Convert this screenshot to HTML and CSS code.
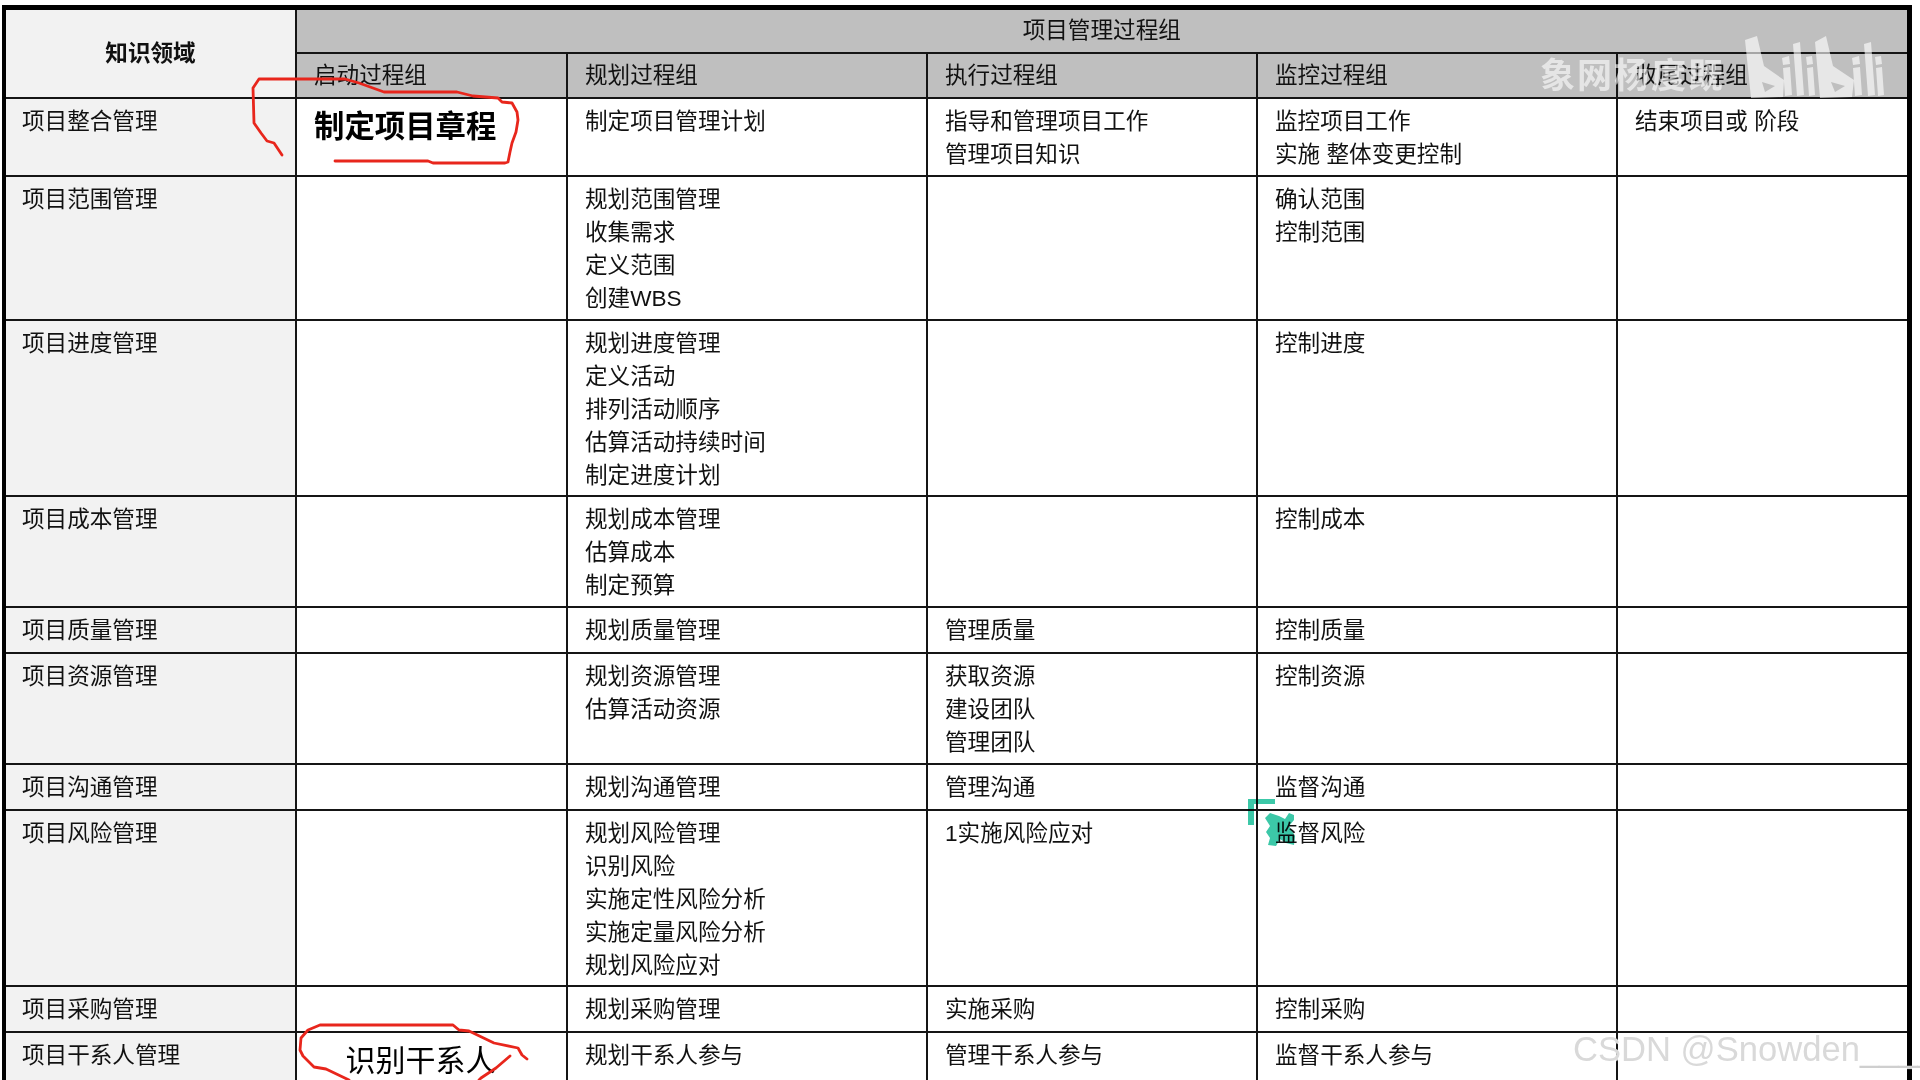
FILE: index.html
```html
<!DOCTYPE html>
<html lang="zh-CN">
<head>
<meta charset="utf-8">
<title>项目管理过程组</title>
<link rel="stylesheet" href="styles.css">
</head>
<body>
<main class="page">
<table class="grid">
<colgroup><col class="c0"><col class="c1"><col class="c2"><col class="c3"><col class="c4"><col class="c5"></colgroup>
<thead>
<tr class="h-top"><th rowspan="2" class="area-head">知识领域</th><th colspan="5" class="group">项目管理过程组</th></tr>
<tr class="h-sub"><th class="group sub">启动过程组</th><th class="group sub">规划过程组</th><th class="group sub">执行过程组</th><th class="group sub">监控过程组</th><th class="group sub">收尾过程组</th></tr>
</thead>
<tbody>
<tr class="r1"><th class="area">项目整合管理</th><td class="big bold">制定项目章程</td><td>制定项目管理计划</td><td>指导和管理项目工作<br>管理项目知识</td><td>监控项目工作<br>实施 整体变更控制</td><td>结束项目或 阶段</td></tr>
<tr class="r2"><th class="area">项目范围管理</th><td></td><td>规划范围管理<br>收集需求<br>定义范围<br>创建WBS</td><td></td><td>确认范围<br>控制范围</td><td></td></tr>
<tr class="r3"><th class="area">项目进度管理</th><td></td><td>规划进度管理<br>定义活动<br>排列活动顺序<br>估算活动持续时间<br>制定进度计划</td><td></td><td>控制进度</td><td></td></tr>
<tr class="r4"><th class="area">项目成本管理</th><td></td><td>规划成本管理<br>估算成本<br>制定预算</td><td></td><td>控制成本</td><td></td></tr>
<tr class="r5"><th class="area">项目质量管理</th><td></td><td>规划质量管理</td><td>管理质量</td><td>控制质量</td><td></td></tr>
<tr class="r4"><th class="area">项目资源管理</th><td></td><td>规划资源管理<br>估算活动资源</td><td>获取资源<br>建设团队<br>管理团队</td><td>控制资源</td><td></td></tr>
<tr class="r5"><th class="area">项目沟通管理</th><td></td><td>规划沟通管理</td><td>管理沟通</td><td>监督沟通</td><td></td></tr>
<tr class="r3"><th class="area">项目风险管理</th><td></td><td>规划风险管理<br>识别风险<br>实施定性风险分析<br>实施定量风险分析<br>规划风险应对</td><td>1实施风险应对</td><td>监督风险</td><td></td></tr>
<tr class="r5"><th class="area">项目采购管理</th><td></td><td>规划采购管理</td><td>实施采购</td><td>控制采购</td><td></td></tr>
<tr class="r6"><th class="area">项目干系人管理</th><td class="big center">识别干系人</td><td>规划干系人参与</td><td>管理干系人参与</td><td>监督干系人参与</td><td></td></tr>
</tbody>
</table>
<svg class="marks" viewBox="0 0 1920 1080" aria-hidden="true">
<g class="ink">
<path d="M282 155L274 143L267 141L261 133L254 123L253 88L259 79L326 79L345 79L359 83L384 92L457 92L473 96L498 98L502 102L512 103L517 112L518 120L516 132L512 143L510 152L508 162L505 163L433 163L428 161L335 161"/>
<path d="M349 1080L326 1069L314 1067L303 1056L300 1050L301 1038L308 1030L320 1025L453 1025L459 1030L469 1031L494 1043L518 1048L522 1055L527 1059"/>
<path d="M510 1056L496 1068L481 1078L479 1080"/>
</g>
<g class="teal">
<path d="M1248 799H1275V804H1254V825H1248Z"/>
<path d="M1265 818L1270 813L1279 816L1285 819L1289 813L1294 815L1294 820L1289 826L1295 836L1294 845L1286 843L1280 839L1276 846L1268 845L1270 838L1266 832L1270 826Z"/>
</g>
<g class="logo">
<path d="M1745 40L1757 36L1764 66L1784 80L1783 97L1751 98ZM1762 82L1765 92L1775 86Z" fill-rule="evenodd"/>
<path d="M1782 58L1789 56L1790 64L1783 65ZM1783 68L1790 67L1792 95L1785 96ZM1793 44L1800 42L1804 95L1797 96ZM1806 57L1812 56L1813 64L1807 65ZM1807 68L1813 67L1815 95L1809 96Z"/>
<path d="M1815 42L1826 36L1833 66L1854 80L1852 97L1820 98ZM1831 82L1835 92L1845 86Z" fill-rule="evenodd"/>
<path d="M1852 58L1859 56L1860 64L1853 65ZM1853 68L1860 67L1862 95L1855 96ZM1864 44L1871 42L1875 95L1868 96ZM1875 57L1881 56L1882 64L1876 65ZM1876 68L1882 67L1884 95L1878 96Z"/>
</g>
</svg>
<div class="wm-cn">象网杨度既</div>
<div class="wm-csdn">CSDN @Snowden<span class="wm-rule">____</span></div>
</main>
</body>
</html>
```
FILE: styles.css
```css
html, body { margin: 0; padding: 0; background: #fff; }
body { width: 1920px; height: 1080px; overflow: hidden; }
.page { position: relative; width: 1920px; height: 1080px; overflow: hidden; padding: 5px 0 0 2px; box-sizing: border-box; filter: blur(0.4px); }
.grid {
  border-collapse: collapse; table-layout: fixed; width: 1907px;
  font-family: "Liberation Sans", "Noto Sans CJK SC", sans-serif;
  font-size: 22.6px; line-height: 33px; color: #111; border: 4px solid #000;
  border-top-width: 5px; border-right-width: 5px;
}
.c0 { width: 292px; } .c1 { width: 271px; } .c2 { width: 360px; }
.c3 { width: 330px; } .c4 { width: 360px; } .c5 { width: 292px; }
th, td { border: 2px solid #151515; padding: 6px 0 0 17px; vertical-align: top; text-align: left; font-weight: 400; }
.h-top { height: 45px; } .h-sub { height: 45px; }
.r1 { height: 78px; } .r2 { height: 144px; } .r3 { height: 176px; }
.r4 { height: 111px; } .r5 { height: 46px; } .r6 { height: 80px; }
.area { background: #f2f2f2; padding-left: 16px; }
.area-head { background: #f2f2f2; font-weight: 700; text-align: center; vertical-align: middle; padding: 0; font-size: 22.6px; }
.group { background: #bfbfbf; text-align: center; padding: 4px 0 0; }
.sub { text-align: left; padding: 5px 0 0 17px; }
.big { font-size: 30.4px; line-height: 46px; color: #000; padding-top: 4px; }
.bold { font-weight: 700; }
.center { font-size: 30px; text-align: center; padding: 5px 22px 0 0; }
.marks { position: absolute; left: 0; top: 0; width: 1920px; height: 1080px; pointer-events: none; }
.ink path { fill: none; stroke: #e8261c; stroke-width: 2.8; stroke-linejoin: round; stroke-linecap: round; }
.teal { mix-blend-mode: multiply; }
.teal path { fill: #3cc8a8; }
.logo path { fill: #fff; fill-opacity: .62; }
.wm-cn { position: absolute; left: 1540px; top: 50px; font: 700 35px/46px "Noto Sans CJK SC", sans-serif; letter-spacing: 2px; color: rgba(255,255,255,.6); white-space: nowrap; }
.wm-csdn { position: absolute; left: 1573px; top: 1028px; font: 400 34.6px/42px "Liberation Sans", sans-serif; color: #d9d9d9; text-shadow: 1px 1px 1px rgba(255,255,255,.9); white-space: nowrap; }
.wm-rule { color: #cfcfcf; }
```
